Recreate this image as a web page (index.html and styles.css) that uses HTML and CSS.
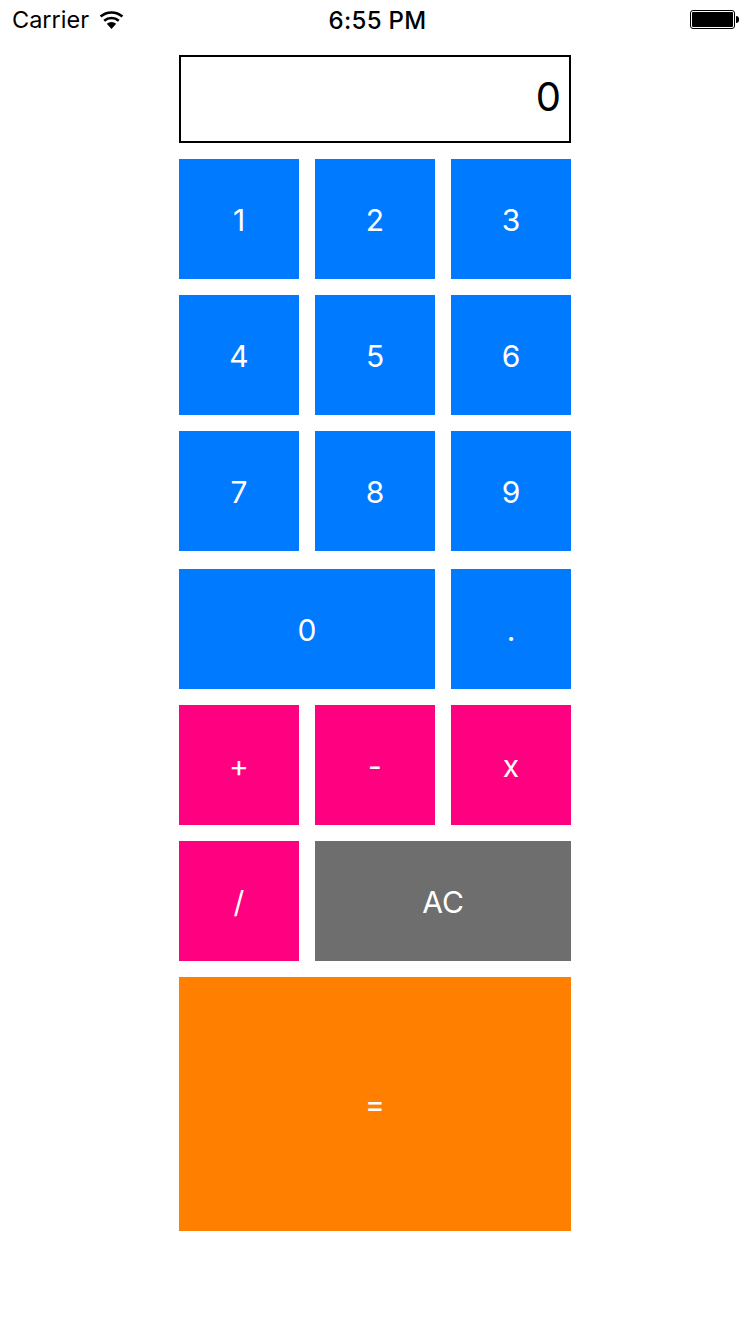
FILE: index.html
```html
<!DOCTYPE html>
<html lang="en">
<head>
  <meta charset="UTF-8" />
  <title>Calculator</title>
  <link rel="stylesheet" href="styles.css">
</head>
<body>
  <div class="status-bar">
    <div class="status-left">
      <span class="carrier">Carrier</span>
      <svg class="wifi" width="25" height="19" viewBox="0 0 25 19">
        <path d="M12.5 19 L7.8 13.7 A7 7 0 0 1 17.2 13.7 Z" fill="#000"/>
        <path d="M5.2 10.8 A11 11 0 0 1 19.8 10.8" fill="none" stroke="#000" stroke-width="2.6"/>
        <path d="M1.6 6.6 A16.5 16.5 0 0 1 23.4 6.6" fill="none" stroke="#000" stroke-width="2.6"/>
      </svg>
    </div>
    <div class="status-time">6:55 PM</div>
    <div class="battery">
      <div class="battery-body"><div class="battery-fill"></div></div>
      <div class="battery-cap"></div>
    </div>
  </div>

  <div class="calc">
    <div class="display">0</div>
    <div class="row">
      <div class="key blue">1</div>
      <div class="key blue">2</div>
      <div class="key blue">3</div>
    </div>
    <div class="row">
      <div class="key blue">4</div>
      <div class="key blue">5</div>
      <div class="key blue">6</div>
    </div>
    <div class="row">
      <div class="key blue">7</div>
      <div class="key blue">8</div>
      <div class="key blue">9</div>
    </div>
    <div class="row row-zero">
      <div class="key blue wide">0</div>
      <div class="key blue">.</div>
    </div>
    <div class="row">
      <div class="key pink">+</div>
      <div class="key pink">-</div>
      <div class="key pink">x</div>
    </div>
    <div class="row">
      <div class="key pink">/</div>
      <div class="key gray wide">AC</div>
    </div>
    <div class="row">
      <div class="key orange equals">=</div>
    </div>
  </div>
</body>
</html>
```

FILE: styles.css
```css
body {
  margin: 0;
  height: 1333px;
  overflow: hidden;
  background-color: #fff;
  color: #000;
  font-family: Inter, "Liberation Sans", sans-serif;
}

.status-bar {
  display: flex;
  justify-content: space-between;
  align-items: center;
  height: 40px;
  padding: 0 11px 0 12px;
  position: relative;
}

.status-left {
  display: flex;
  align-items: center;
  gap: 10px;
}

.carrier {
  font-size: 23.5px;
  margin-bottom: 2px;
}

.wifi {
  margin-bottom: 2px;
}

.status-time {
  position: absolute;
  left: 5px;
  right: 0;
  text-align: center;
  font-size: 24px;
  font-weight: 500;
  letter-spacing: 0.3px;
}

.battery {
  display: flex;
  align-items: center;
  margin-bottom: 1px;
}

.battery-body {
  width: 45px;
  height: 19px;
  box-sizing: border-box;
  border: 1px solid #000;
  border-radius: 3px;
  padding: 1px;
}

.battery-fill {
  height: 100%;
  background-color: #000;
  border-radius: 1px;
}

.battery-cap {
  width: 3px;
  height: 7px;
  margin-left: 1px;
  background-color: #000;
  border-radius: 0 3px 3px 0;
}

.calc {
  width: 392px;
  margin: 15px auto 0;
  display: flex;
  flex-direction: column;
  gap: 16px;
}

.display {
  height: 88px;
  box-sizing: border-box;
  border: 2px solid #000;
  padding: 0 8px 5px 0;
  display: flex;
  align-items: center;
  justify-content: flex-end;
  font-size: 40px;
}

.row {
  display: flex;
  gap: 16px;
}

.row-zero {
  margin-top: 2px;
}

.key {
  width: 120px;
  height: 120px;
  box-sizing: border-box;
  padding-top: 1px;
  display: flex;
  align-items: center;
  justify-content: center;
  color: #fff;
  font-size: 30px;
}

.key.wide {
  width: 256px;
}

.key.equals {
  width: 392px;
  height: 254px;
  padding-top: 0;
}

.blue {
  background-color: #007aff;
}

.pink {
  background-color: #ff0080;
}

.gray {
  background-color: #6e6e6e;
}

.orange {
  background-color: #ff8000;
}
```
